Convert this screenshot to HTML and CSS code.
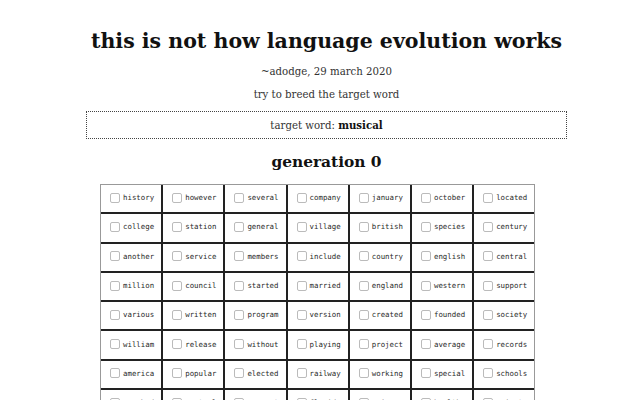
FILE: index.html
```html
<!DOCTYPE html>
<html lang="en">
<head>
<meta charset="utf-8">
<title>this is not how language evolution works</title>
<link rel="stylesheet" href="styles.css">
</head>
<body>
<main class="page">
  <h1 class="title">this is not how language evolution works</h1>
  <p class="byline">~adodge, 29 march 2020</p>
  <p class="intro">try to breed the target word</p>
  <div class="target">target word: <b>musical</b></div>
  <h2 class="gen">generation 0</h2>
  <table class="pool">
    <tbody>
      <tr>
        <td><label><input type="checkbox">history</label></td>
        <td><label><input type="checkbox">however</label></td>
        <td><label><input type="checkbox">several</label></td>
        <td><label><input type="checkbox">company</label></td>
        <td><label><input type="checkbox">january</label></td>
        <td><label><input type="checkbox">october</label></td>
        <td><label><input type="checkbox">located</label></td>
      </tr>
      <tr>
        <td><label><input type="checkbox">college</label></td>
        <td><label><input type="checkbox">station</label></td>
        <td><label><input type="checkbox">general</label></td>
        <td><label><input type="checkbox">village</label></td>
        <td><label><input type="checkbox">british</label></td>
        <td><label><input type="checkbox">species</label></td>
        <td><label><input type="checkbox">century</label></td>
      </tr>
      <tr>
        <td><label><input type="checkbox">another</label></td>
        <td><label><input type="checkbox">service</label></td>
        <td><label><input type="checkbox">members</label></td>
        <td><label><input type="checkbox">include</label></td>
        <td><label><input type="checkbox">country</label></td>
        <td><label><input type="checkbox">english</label></td>
        <td><label><input type="checkbox">central</label></td>
      </tr>
      <tr>
        <td><label><input type="checkbox">million</label></td>
        <td><label><input type="checkbox">council</label></td>
        <td><label><input type="checkbox">started</label></td>
        <td><label><input type="checkbox">married</label></td>
        <td><label><input type="checkbox">england</label></td>
        <td><label><input type="checkbox">western</label></td>
        <td><label><input type="checkbox">support</label></td>
      </tr>
      <tr>
        <td><label><input type="checkbox">various</label></td>
        <td><label><input type="checkbox">written</label></td>
        <td><label><input type="checkbox">program</label></td>
        <td><label><input type="checkbox">version</label></td>
        <td><label><input type="checkbox">created</label></td>
        <td><label><input type="checkbox">founded</label></td>
        <td><label><input type="checkbox">society</label></td>
      </tr>
      <tr>
        <td><label><input type="checkbox">william</label></td>
        <td><label><input type="checkbox">release</label></td>
        <td><label><input type="checkbox">without</label></td>
        <td><label><input type="checkbox">playing</label></td>
        <td><label><input type="checkbox">project</label></td>
        <td><label><input type="checkbox">average</label></td>
        <td><label><input type="checkbox">records</label></td>
      </tr>
      <tr>
        <td><label><input type="checkbox">america</label></td>
        <td><label><input type="checkbox">popular</label></td>
        <td><label><input type="checkbox">elected</label></td>
        <td><label><input type="checkbox">railway</label></td>
        <td><label><input type="checkbox">working</label></td>
        <td><label><input type="checkbox">special</label></td>
        <td><label><input type="checkbox">schools</label></td>
      </tr>
      <tr>
        <td><label><input type="checkbox">reached</label></td>
        <td><label><input type="checkbox">control</label></td>
        <td><label><input type="checkbox">current</label></td>
        <td><label><input type="checkbox">florida</label></td>
        <td><label><input type="checkbox">science</label></td>
        <td><label><input type="checkbox">health</label></td>
        <td><label><input type="checkbox">private</label></td>
      </tr>
    </tbody>
  </table>
</main>
</body>
</html>
```
FILE: styles.css
```css
html, body {
  margin: 0;
  background: #fff;
}

body {
  font-family: "DejaVu Serif", serif;
  color: #222;
}

.page {
  width: 481px;
  margin-left: 86px;
  padding-top: 26px;
  text-align: center;
}

.title {
  margin: 0;
  font-size: 20.5px;
  line-height: 30px;
  font-weight: bold;
  white-space: nowrap;
  color: #111;
}

.byline,
.intro {
  margin: 9px 0 0;
  font-size: 10.2px;
  line-height: 14px;
  color: #333;
}

.target {
  margin-top: 9px;
  border: 1px dotted #444;
  padding: 5.5px 0;
  font-size: 10.2px;
  line-height: 14px;
  color: #333;
}

.target b {
  color: #111;
}

.gen {
  margin: 12px 0 0;
  font-size: 15.4px;
  line-height: 22px;
  font-weight: bold;
  color: #111;
}

.pool {
  margin: 11px 0 0 14px;
  border: 1px solid #999;
  border-spacing: 0;
  font-family: "DejaVu Sans Mono", monospace;
  font-size: 7.4px;
  color: #2a2a2a;
}

.pool td {
  width: 51.2px;
  height: 27.3px;
  padding: 0 0 0 9px;
  border-right: 2px solid #222;
  border-bottom: 2px solid #222;
  text-align: left;
}

.pool td:last-child {
  border-right: 0;
}

.pool label {
  display: inline-flex;
  align-items: center;
  gap: 3px;
}

.pool input {
  appearance: none;
  margin: 0;
  width: 10px;
  height: 10px;
  border: 1px solid #bbb;
  border-radius: 2px;
  background: #fff;
}
```
